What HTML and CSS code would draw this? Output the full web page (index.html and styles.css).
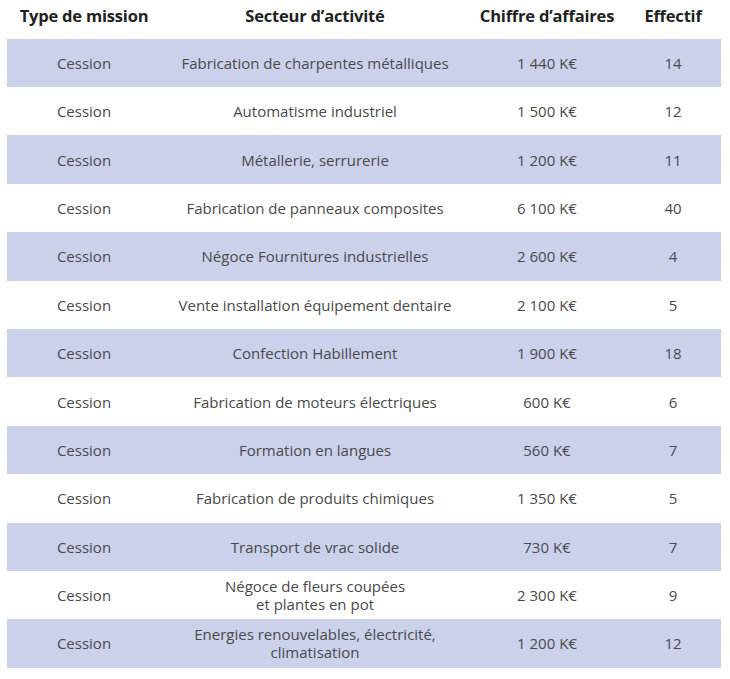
FILE: index.html
```html
<!DOCTYPE html>
<html lang="fr">
<head>
<meta charset="utf-8">
<link rel="stylesheet" href="styles.css">
</head>
<body>
<table class="missions">
  <colgroup>
    <col class="c1"><col class="c2"><col class="c3"><col class="c4">
  </colgroup>
  <thead>
    <tr><th>Type de mission</th><th>Secteur d’activité</th><th>Chiffre d’affaires</th><th>Effectif</th></tr>
  </thead>
  <tbody>
    <tr><td>Cession</td><td>Fabrication de charpentes métalliques</td><td>1 440 K€</td><td>14</td></tr>
    <tr><td>Cession</td><td>Automatisme industriel</td><td>1 500 K€</td><td>12</td></tr>
    <tr><td>Cession</td><td>Métallerie, serrurerie</td><td>1 200 K€</td><td>11</td></tr>
    <tr><td>Cession</td><td>Fabrication de panneaux composites</td><td>6 100 K€</td><td>40</td></tr>
    <tr><td>Cession</td><td>Négoce Fournitures industrielles</td><td>2 600 K€</td><td>4</td></tr>
    <tr><td>Cession</td><td>Vente installation équipement dentaire</td><td>2 100 K€</td><td>5</td></tr>
    <tr><td>Cession</td><td>Confection Habillement</td><td>1 900 K€</td><td>18</td></tr>
    <tr><td>Cession</td><td>Fabrication de moteurs électriques</td><td>600 K€</td><td>6</td></tr>
    <tr><td>Cession</td><td>Formation en langues</td><td>560 K€</td><td>7</td></tr>
    <tr><td>Cession</td><td>Fabrication de produits chimiques</td><td>1 350 K€</td><td>5</td></tr>
    <tr><td>Cession</td><td>Transport de vrac solide</td><td>730 K€</td><td>7</td></tr>
    <tr><td>Cession</td><td>Négoce de fleurs coupées<br>et plantes en pot</td><td>2 300 K€</td><td>9</td></tr>
    <tr><td>Cession</td><td>Energies renouvelables, électricité,<br>climatisation</td><td>1 200 K€</td><td>12</td></tr>
  </tbody>
</table>
</body>
</html>
```

FILE: styles.css
```css
html, body {
  margin: 0;
  padding: 0;
  background: #ffffff;
}
body {
  padding-left: 7px;
  font-family: "Open Sans", "Noto Sans", sans-serif;
}
.missions {
  width: 714px;
  border-collapse: collapse;
  table-layout: fixed;
}
.c1 { width: 154px; }
.c2 { width: 308px; }
.c3 { width: 156px; }
.c4 { width: 96px; }
.missions th {
  height: 38.6px;
  box-sizing: border-box;
  padding: 0 0 6px 0;
  font-size: 16.5px;
  line-height: 20px;
  font-weight: 700;
  color: #222222;
  text-align: center;
  vertical-align: middle;
  letter-spacing: -0.2px;
}
.missions td {
  height: 48.4px;
  padding: 0;
  box-sizing: border-box;
  font-size: 15px;
  line-height: 18px;
  color: #4a4a4a;
  text-align: center;
  vertical-align: middle;
}
.missions tbody tr:nth-child(odd) td {
  background: #cbd1ea;
}
```
